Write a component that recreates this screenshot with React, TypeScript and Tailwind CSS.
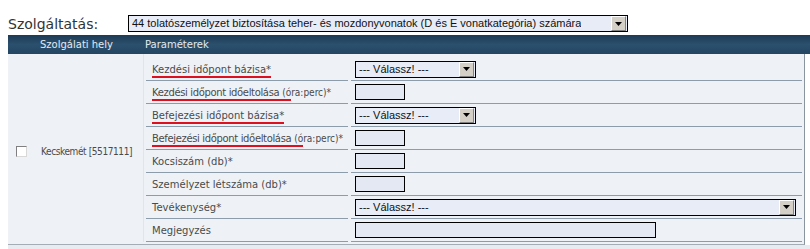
import { ReactNode } from "react";

function Arrow() {
  return (
    <span className="flex items-center justify-center w-[15px] h-[15px] bg-[#d4d0c8] border border-t-white border-l-white border-r-[#808080] border-b-[#808080]">
      <svg width="7" height="4" viewBox="0 0 7 4">
        <path d="M0 0h7L3.5 4z" fill="#000" />
      </svg>
    </span>
  );
}

function Select({ text, width }: { text: string; width: string }) {
  return (
    <div className={`${width} h-[17px] flex items-center justify-between bg-[#e8ecf6] border border-black pl-[3px] pr-[1px] font-['Liberation_Sans',Arial,sans-serif] text-[11px] text-[#111]`}>
      <span className="truncate">{text}</span>
      <Arrow />
    </div>
  );
}

function Input({ width }: { width: string }) {
  return <div className={`${width} h-[16px] bg-[#e3e8f3] border border-black`} />;
}

function Marked({ children, tight }: { children: ReactNode; tight?: boolean }) {
  return (
    <span className={`border-b-2 border-[#dd1020] pb-[1px] ${tight ? "tracking-[-0.35px]" : ""}`}>{children}</span>
  );
}

// the "(óra:perc)*" tail is set narrower in the original
function Tail({ children }: { children: ReactNode }) {
  return <span className="font-['DejaVu_Sans_Condensed','Liberation_Sans',sans-serif] tracking-normal">{children}</span>;
}

type Row = { label: ReactNode; value: ReactNode };

const rows: Row[] = [
  { label: <Marked>Kezdési időpont bázisa*</Marked>, value: <Select text="--- Válassz! ---" width="w-[121px]" /> },
  {
    label: (
      <>
        <Marked tight>
          Kezdési időpont időeltolása <Tail>(ó</Tail>
        </Marked>
        <Tail>ra:perc)*</Tail>
      </>
    ),
    value: <Input width="w-[50px]" />,
  },
  { label: <Marked>Befejezési időpont bázisa*</Marked>, value: <Select text="--- Válassz! ---" width="w-[121px]" /> },
  {
    label: (
      <>
        <Marked tight>
          Befejezési időpont időeltolása <Tail>(ó</Tail>
        </Marked>
        <Tail>ra:perc)*</Tail>
      </>
    ),
    value: <Input width="w-[50px]" />,
  },
  { label: "Kocsiszám (db)*", value: <Input width="w-[50px]" /> },
  { label: "Személyzet létszáma (db)*", value: <Input width="w-[50px]" /> },
  { label: "Tevékenység*", value: <Select text="--- Válassz! ---" width="w-[441px]" /> },
  { label: "Megjegyzés", value: <Input width="w-[301px]" /> },
];

export default function App() {
  return (
    <div className="w-[810px] h-[249px] overflow-hidden bg-white font-['DejaVu_Sans',Verdana,sans-serif]">
      {/* service picker */}
      <div className="flex items-center h-[35px] pt-[12px] pl-2">
        <span className="w-[120px] text-[14px] text-[#333] leading-none">Szolgáltatás:</span>
        <Select
          text="44 tolatószemélyzet biztosítása teher- és mozdonyvonatok (D és E vonatkategória) számára"
          width="w-[500px]"
        />
      </div>

      <div className="ml-2">
        {/* header */}
        <div className="flex items-center h-[19px] bg-linear-to-b from-[#1d3b55] via-[#2b506e] to-[#234661] text-[10px] text-[#e3eaf0]">
          <div className="w-[137px] pl-[32px]">Szolgálati hely</div>
          <div>Paraméterek</div>
        </div>

        {/* body */}
        <div className="flex w-[797px] bg-[#eef2f7] border-r border-[#8a949e] border-b border-b-[#a4acb4] pb-[2px]">
          <div className="w-[136px] flex items-center gap-[14px] pl-2 pt-[6px] border-r border-[#dfe5ec] text-[10px] text-[#4a4a4a] whitespace-nowrap">
            <span className="shrink-0 w-[11px] h-[11px] bg-white border border-t-[#7f7f7f] border-l-[#7f7f7f] border-r-[#d8d8d8] border-b-[#d8d8d8]" />
            <span className="font-['DejaVu_Sans_Condensed','Liberation_Sans',sans-serif] tracking-[-0.4px]">Kecskemét [5517111]</span>
          </div>
          <div className="flex-1 pt-[4px] pl-[2px] pr-[2px]">
            {rows.map((row, i) => (
              <div key={i} className="flex gap-[3px] h-[23px]">
                <div className="w-[202px] shrink-0 flex items-center pl-[6px] border-b border-[#8c9cab] text-[10px] text-[#4a4a4a] whitespace-nowrap">
                  <span>{row.label}</span>
                </div>
                <div className="flex-1 flex items-center pl-[4px] border-b border-[#8c9cab]">{row.value}</div>
              </div>
            ))}
          </div>
        </div>
        <div className="h-[10px] bg-[#e8ecf0]" />
      </div>
    </div>
  );
}
